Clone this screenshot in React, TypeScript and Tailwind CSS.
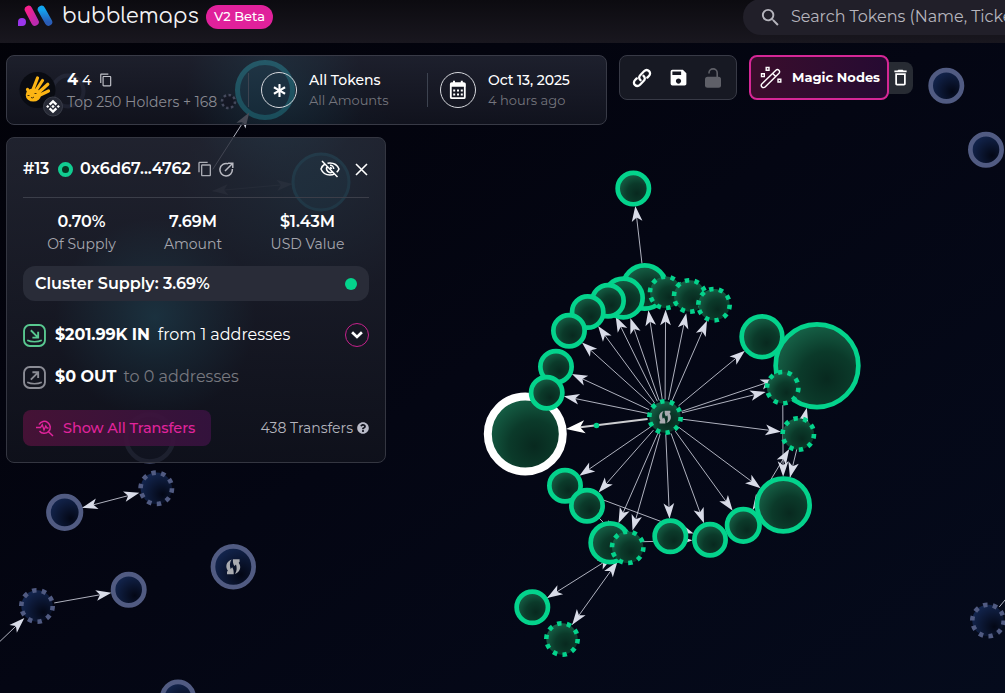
import { FaAsterisk, FaQuestionCircle } from 'react-icons/fa'
import { MdContentCopy, MdDeleteOutline, MdSave, MdSearch } from 'react-icons/md'

type Node = { x: number; y: number; r: number; dashed?: boolean; swap?: boolean }
type Edge = { from: Node; to: Node; both?: boolean }

const node = (x: number, y: number, r: number, dashed = false, swap = false): Node => ({
    x,
    y,
    r,
    dashed,
    swap,
})

const hub = node(665, 417, 18, true, true)
const selected = node(525.3, 434, 41.5)
const top = node(633.3, 188.6, 18)
const g1 = node(644.7, 287, 24)
const g2 = node(623.3, 298, 21.7)
const g3 = node(608, 300.7, 18)
const g4 = node(587.7, 312, 18)
const g5 = node(569, 330.7, 18)
const g6 = node(556, 366.7, 18)
const g7 = node(546.7, 392.7, 18)
const g8 = node(565, 485.7, 18)
const g9 = node(587, 505.7, 18)
const g10 = node(610, 542.7, 21.7)
const g11 = node(627.7, 547.3, 18, true)
const g12 = node(670.3, 536.3, 18)
const g13 = node(710, 539.7, 18)
const g14 = node(743.3, 525.3, 18.6)
const g15 = node(783.3, 505, 28.7)
const g16 = node(798.3, 434, 18, true)
const g17 = node(782.7, 387.7, 18, true)
const g18 = node(817, 365.7, 43.7)
const g19 = node(762, 336.7, 22.7)
const g20 = node(665.7, 292.3, 18, true)
const g21 = node(689.7, 296, 18, true)
const g22 = node(714, 304.7, 18, true)
const g23 = node(532.3, 607.3, 18)
const g24 = node(562, 639, 18, true)

const clusterNodes = [
    top, g1, g2, g3, g4, g5, g6, g8, g9, g10, g11, g12, g13, g14, g15,
    g19, g18, g17, g16, g20, g21, g22, g23, g24, hub,
]

const hubEdges = [
    g1, g2, g3, g4, g5, g6, g7, g8, g9, g10, g11, g12, g13, g14, g15,
    g16, g17, g18, g19, g20, g21, g22,
]

const clusterEdges: Edge[] = [
    ...hubEdges.map((to) => ({ from: hub, to })),
    { from: g1, to: top },
    { from: g8, to: g13 },
    { from: g10, to: g13 },
    { from: g9, to: g11 },
    { from: g23, to: g11, both: true },
    { from: g24, to: g11, both: true },
    { from: g17, to: g15 },
    { from: g15, to: g18, both: true },
    { from: g14, to: g16, both: true },
]

const b1 = node(64.7, 512.3, 18.6)
const b2 = node(156.3, 488.3, 18, true)
const b3 = node(128.7, 589.7, 18)
const b4 = node(37, 606, 18, true)
const b5 = node(988, 620.5, 18, true)

const looseNodes = [
    b1, b2, b3, b4, b5,
    node(233.3, 566.7, 22.7, false, true),
    node(178, 697.5, 18),
    node(946.3, 85.7, 18),
    node(986, 149.7, 18),
]

const looseEdges: Edge[] = [
    { from: b1, to: b2, both: true },
    { from: b4, to: b3 },
    { from: node(-30, 670, 0), to: b4 },
    { from: b5, to: node(1030, 570, 0) },
]

const Arrow = ({ from, to, both, color = '#d9dce8', size = 15.5, width = 1 }: Edge & {
    color?: string
    size?: number
    width?: number
}) => {
    const len = Math.hypot(to.x - from.x, to.y - from.y)
    const ux = (to.x - from.x) / len
    const uy = (to.y - from.y) / len
    const angle = (Math.atan2(uy, ux) * 180) / Math.PI
    const end = { x: to.x - ux * (to.r - 0.5), y: to.y - uy * (to.r - 0.5) }
    const start = { x: from.x + ux * (from.r - 0.5), y: from.y + uy * (from.r - 0.5) }
    const head = `M0 0L${-size} ${-size / 2.9}L${-size * 0.75} 0L${-size} ${size / 2.9}Z`

    return (
        <g fill={color}>
            <line
                x1={start.x}
                y1={start.y}
                x2={end.x - ux * 4}
                y2={end.y - uy * 4}
                stroke={color}
                strokeWidth={width}
                strokeOpacity={0.8}
            />
            <path d={head} transform={`translate(${end.x} ${end.y}) rotate(${angle})`} />
            {both && (
                <path d={head} transform={`translate(${start.x} ${start.y}) rotate(${angle + 180})`} />
            )}
        </g>
    )
}

const swapHalf = 'M1.200 7.200C3.300 4 3.200 1 2.200-2.200L.6-.6C-1-3-.9-5.500-.9-7.500H5.800V-5L4.900-4C7.600-.5 7 5 1.200 7.200Z'

const SwapGlyph = ({ x, y, scale }: { x: number; y: number; scale: number }) => (
    <g transform={`translate(${x} ${y}) scale(${scale})`} fill="#a9abb0">
        <path d={swapHalf} transform="translate(.5 0)" />
        <path d={swapHalf} transform="translate(-.5 0) rotate(180)" />
    </g>
)

const Bubble = ({ n, color, fill }: { n: Node; color: string; fill: string }) => {
    const stroke = n.dashed ? 4.6 : 4.7
    return (
        <g>
            <circle cx={n.x} cy={n.y} r={n.dashed ? n.r - 2.3 : n.r - 3} fill={`url(#${fill})`} />
            <circle
                cx={n.x}
                cy={n.y}
                r={n.r - stroke / 2}
                fill="none"
                stroke={color}
                strokeWidth={stroke}
                pathLength={n.dashed ? 20 : undefined}
                strokeDasharray={n.dashed ? '0.9 1.1' : undefined}
            />
            {n.swap && <SwapGlyph x={n.x} y={n.y} scale={n.dashed ? 0.85 : 1} />}
        </g>
    )
}

const BubbleGraph = () => (
    <svg className="absolute inset-0" width="1005" height="693" viewBox="0 0 1005 693">
        <defs>
            <radialGradient id="green" cx=".62" cy=".66" r=".75">
                <stop offset="0" stopColor="#08291f" />
                <stop offset=".45" stopColor="#0b3a2a" />
                <stop offset="1" stopColor="#18684c" />
            </radialGradient>
            <radialGradient id="navy" cx=".7" cy=".7" r=".75">
                <stop offset="0" stopColor="#030715" />
                <stop offset="1" stopColor="#13254e" />
            </radialGradient>
            <radialGradient id="glow">
                <stop offset="0" stopColor="#22a9c4" stopOpacity=".75" />
                <stop offset=".4" stopColor="#22a9c4" stopOpacity=".42" />
                <stop offset="1" stopColor="#22a9c4" stopOpacity="0" />
            </radialGradient>
            <clipPath id="panels">
                <rect x="6" y="55" width="601" height="70" rx="8" />
                <rect x="6" y="137" width="380" height="326" rx="8" />
            </clipPath>
        </defs>

        {/* bubbles that shine through the panels */}
        <g clipPath="url(#panels)">
            <circle cx="155" cy="318" r="100" fill="url(#glow)" />
            <circle cx="300" cy="190" r="120" fill="url(#glow)" opacity=".35" />
            <circle cx="275" cy="90" r="90" fill="url(#glow)" opacity=".6" />
        </g>
        <circle cx="265" cy="90" r="27.500" fill="#125d74" stroke="#25ecff" strokeWidth="5" />
        <circle cx="321" cy="182" r="28" fill="#126a84" stroke="#22d5f6" strokeWidth="3" opacity=".5" />
        <circle cx="68" cy="91" r="15.500" fill="none" stroke="#5f6991" strokeWidth="4" opacity=".45" />
        <circle cx="149.700" cy="438" r="23.500" fill="#10182f" stroke="#6a749c" strokeWidth="4.500" opacity=".7" />
        <circle cx="228.500" cy="101.500" r="6.500" fill="#000614" />
        <circle
            cx="228.500"
            cy="101.500"
            r="6.500"
            fill="none"
            stroke="#c0cbf4"
            strokeWidth="2.500"
            pathLength="16"
            strokeDasharray="1 1"
        />
        <g opacity=".2">
            <Arrow from={node(213, 191, 0)} to={node(292, 184, 0)} both />
        </g>
        <Arrow from={node(213, 169, 0)} to={node(249, 113, 0)} />

        {looseEdges.map((e, i) => (
            <Arrow key={i} {...e} />
        ))}
        {looseNodes.map((n, i) => (
            <Bubble key={i} n={n} color="#515b82" fill="navy" />
        ))}

        {clusterEdges.map((e, i) => (
            <Arrow key={i} {...e} />
        ))}
        <Arrow from={hub} to={selected} color="#ffffff" size={19} width={2} />
        <circle cx="596.500" cy="425.500" r="2.800" fill="#04d38c" />
        {clusterNodes.map((n, i) => (
            <Bubble key={i} n={n} color="#04d38c" fill="green" />
        ))}
        <circle cx={selected.x} cy={selected.y} r="37.500" fill="url(#green)" stroke="#fff" strokeWidth="8" />
        <Bubble n={g7} color="#04d38c" fill="green" />
    </svg>
)

const Logo = () => (
    <svg width="35" height="22" viewBox="0 0 35 22">
        <defs>
            <linearGradient id="pink" x1="0" y1="0" x2="1" y2="1">
                <stop stopColor="#f5208c" />
                <stop offset="1" stopColor="#bb2ab0" />
            </linearGradient>
            <linearGradient id="blue" x1="0" y1="0" x2="0" y2="1">
                <stop stopColor="#11a5f0" />
                <stop offset="1" stopColor="#2a5cb6" />
            </linearGradient>
        </defs>
        <circle cx="4" cy="17" r="4" fill="#9a35ea" />
        <path d="M0 17v4h4z" fill="#9a35ea" />
        <path d="M10.500 4.500L17 17" stroke="url(#pink)" strokeWidth="7.600" strokeLinecap="round" />
        <path d="M23.500 4.500L30.500 17" stroke="url(#blue)" strokeWidth="7.600" strokeLinecap="round" />
    </svg>
)

const TokenAvatar = () => (
    <svg width="44" height="46" viewBox="0 0 44 46">
        <circle cx="18.500" cy="18" r="18" fill="#090b12" />
        <g stroke="#fcb514" strokeWidth="3.200" strokeLinecap="round">
            <path d="M11.500 23L8.500 17.500M13 20L18.500 6M16 20L23.500 8.500M18 22L28.800 12.300M18 24.500L29.500 19" />
        </g>
        <ellipse cx="14.300" cy="23" rx="7.600" ry="6.600" fill="#fcb514" />
        <path d="M8.500 23.500h2M15.500 21.500h2M12 25.500q1.500 1 3-.5" stroke="#443008" strokeWidth="1" fill="none" />
        <circle cx="34" cy="34.500" r="9.500" fill="#272a36" stroke="#3a3d49" />
        <g transform="translate(34 34.500)" fill="#fff">
            <path d="M0-6.800L4.200-2.700 2.600-1.100 0-3.600-2.600-1.100-4.200-2.700ZM0 6.800L4.200 2.700 2.600 1.100 0 3.600-2.600 1.100-4.200 2.700ZM0-1.700L1.700 0 0 1.700-1.700 0ZM5.300-1.600L6.900 0 5.300 1.600 3.700 0ZM-5.300-1.600L-3.700 0-5.300 1.600-6.900 0Z" />
        </g>
    </svg>
)

const CalendarIcon = () => (
    <svg width="18" height="20" viewBox="0 0 18 20" fill="none" stroke="#fff">
        <rect x="1.800" y="3.200" width="14" height="15" rx="1" strokeWidth="1.800" />
        <path d="M1.500 5h15" strokeWidth="3.500" />
        <path d="M5 .8v4M12.800.8v4" strokeWidth="2" />
        <path d="M4.200 10.500h10M4.200 14.500h10" strokeWidth="2" strokeDasharray="2 1.800" />
    </svg>
)

const ShareIcon = () => (
    <svg width="15" height="15" viewBox="0 0 15 15" fill="none" stroke="#b9bac2" strokeWidth="1.500">
        <path d="M9 1.800A6.200 6.200 0 1 0 13.300 7M6 9l7-7M9 1.200h4.800V6" />
    </svg>
)

const EyeOffIcon = () => (
    <svg width="20" height="18" viewBox="0 0 20 18" fill="none" stroke="#fff" strokeWidth="1.500">
        <path d="M5 4C3 5.200 1.700 7 1 9c1.500 3.600 5 6 9 6 1.600 0 3-.3 4.300-1M7.500 3.200C8.300 3 9.200 3 10 3c4 0 7.500 2.400 9 6-.5 1.300-1.300 2.400-2.300 3.300" />
        <path d="M7.300 6.500a3.800 3.800 0 0 0 5.300 5.300M10 5.300A3.700 3.700 0 0 1 13.700 9M10 7.500A1.600 1.600 0 0 1 11.500 9M2 1l15.500 16" />
    </svg>
)

const LinkIcon = () => (
    <svg width="20" height="20" viewBox="0 0 20 20" fill="none" stroke="#fff" strokeWidth="2.300" strokeLinecap="round">
        <path d="M8.500 12.200C6.800 10.600 6.800 8.600 8.200 7.200L12 3.300C13.600 1.700 15.700 1.700 17.100 3.100S18.300 6.600 16.900 8L15.300 9.600" />
        <path d="M11.500 7.800C13.200 9.400 13.200 11.400 11.800 12.800L8 16.700C6.400 18.300 4.300 18.300 2.900 16.900S1.700 13.400 3.100 12L4.700 10.400" />
    </svg>
)

const UnlockIcon = () => (
    <svg width="16" height="20" viewBox="0 0 16 20">
        <path d="M4 5.500V5a3.700 3.700 0 0 1 8.200 0v4" fill="none" stroke="#5f6068" strokeWidth="1.600" />
        <rect y="8.800" width="16" height="11" rx="2.500" fill="#5f6068" />
    </svg>
)

const WandIcon = () => (
    <svg width="22" height="23" viewBox="0 0 22 23" fill="none" stroke="#fff" strokeWidth="1.400">
        <path d="M2 17.800L15.900 4.200a2.200 2.200 0 0 1 3.100 3.100L5.100 21a2.200 2.200 0 0 1-3.100-3.200ZM12.700 7.500l3 3" />
        <path d="M6.200 1.500h2.800v2.800H6.200zM1.500 7.800h2.800v2.800H1.500zM18 13.200h2.800V16H18z" />
    </svg>
)

const FlowIcon = ({ out = false, color }: { out?: boolean; color: string }) => (
    <svg width="23" height="23" viewBox="0 0 22 22" fill="none" stroke={color} strokeWidth="1.800">
        <rect x="1" y="1" width="20" height="20" rx="5.500" />
        {out ? <path d="M7.500 13L14 6.500M9 6h5.500v5.500" /> : <path d="M7.500 6l6.500 6.500M14.500 7.500V13H9" />}
        <path d="M4 15.500c4 2 10 2 14 0" strokeWidth="1.500" />
    </svg>
)

const TransfersIcon = () => (
    <svg width="18" height="17" viewBox="0 0 18 17" fill="none" stroke="#e0249c" strokeWidth="1.500">
        <path d="M3 4.500A6 6 0 1 1 3.500 11M12.200 11.500L17 16" />
        <path d="M0 7.500h4.500L6.300 4.800 8 10l1.800-4L11 8h1.500" strokeWidth="1.300" />
    </svg>
)

const stats = [
    { value: '0.70%', label: 'Of Supply', width: 'w-[117px]' },
    { value: '7.69M', label: 'Amount', width: 'w-[106px]' },
    { value: '$1.43M', label: 'USD Value', width: 'w-[123px]' },
]

const TopBar = () => (
    <header className="relative flex h-[43px] items-start bg-linear-to-b from-[#0c0b10] to-[#19171f]">
        <div className="mt-[5px] ml-[18px]">
            <Logo />
        </div>
        <span className="mt-px ml-[9px] w-[137px] font-['Comfortaa','Lato'] text-[21px] leading-[30px] tracking-[-0.05px] whitespace-nowrap text-[#f3f3f5]">
            bubblemaps
        </span>
        <span className="mt-[5px] ml-[7px] flex h-6 w-[67px] items-center justify-center rounded-full bg-[#e0219b] text-[13px] font-medium text-white">
            V2 Beta
        </span>
        <div className="absolute top-[-1px] right-0 flex h-9 w-[262px] items-center overflow-hidden rounded-l-full bg-[#211f29] text-[#b6b5bd]">
            <MdSearch className="ml-[16px] shrink-0 text-[23px]" />
            <span className="ml-[9px] text-[16px] tracking-[-0.03px] whitespace-nowrap">Search Tokens (Name, Ticker</span>
        </div>
    </header>
)

const TokenBar = () => (
    <section className="flex h-[70px] w-[601px] items-center rounded-lg border border-[#383a46] bg-linear-to-b from-[#262937]/75 to-[#151722]/75">
        <div className="mt-[9px] ml-[12px] h-[46px] w-11">
            <TokenAvatar />
        </div>
        <div className="mt-[2px] ml-[4px] w-[181px]">
            <div className="flex h-[22px] items-center text-white">
                <span className="text-[16px] font-bold">4</span>
                <span className="ml-1 text-[14px] font-medium">4</span>
                <MdContentCopy className="ml-[8px] text-[14px] text-[#c0c1c8]" />
            </div>
            <div className="h-[22px] text-[14px] leading-[22px] whitespace-nowrap text-[#888991]">
                Top 250 Holders + 168
            </div>
        </div>
        <div className="h-[34px] w-px bg-[#3d4350]" />
        <div className="ml-[12px] flex size-9 items-center justify-center rounded-full border border-[#d5d7dc] text-white">
            <FaAsterisk className="text-[13px]" />
        </div>
        <div className="ml-[12px] w-[118px]">
            <div className="text-[14px] leading-5 font-medium text-white">All Tokens</div>
            <div className="text-[13px] leading-5 tracking-[-0.05px] text-[#74757d]">All Amounts</div>
        </div>
        <div className="h-[34px] w-px bg-[#3d4350]" />
        <div className="ml-[12px] flex size-9 items-center justify-center rounded-full border border-[#d5d7dc]">
            <CalendarIcon />
        </div>
        <div className="ml-[12px]">
            <div className="text-[14px] leading-5 font-medium tracking-[-0.1px] text-white">Oct 13, 2025</div>
            <div className="text-[13px] leading-5 text-[#74757d]">4 hours ago</div>
        </div>
    </section>
)

const Toolbar = () => (
    <>
        <div className="ml-3 flex h-[45px] w-[118px] items-center gap-4 rounded-lg border border-[#383a46] bg-[#171923] pl-3">
            <LinkIcon />
            <MdSave className="text-[21px] text-white" />
            <UnlockIcon />
        </div>
        <div className="ml-3 flex items-center">
            <button className="z-10 flex h-[45px] w-[140px] items-center rounded-lg border-2 border-[#d52796] bg-linear-to-r from-[#3a0d2c] to-[#260a32] pl-[9px] text-white">
                <WandIcon />
                <span className="ml-[10px] text-[13px] font-bold whitespace-nowrap">Magic Nodes</span>
            </button>
            <div className="-ml-2 flex h-8 w-8 items-center rounded-lg bg-[#272b33] pl-[9px]">
                <MdDeleteOutline className="text-[21px] text-white" />
            </div>
        </div>
    </>
)

const AddressPanel = () => (
    <section className="mt-[12px] h-[326px] w-[380px] rounded-lg border border-[#343641] bg-linear-to-b from-[#272a37]/80 to-[#11131d]/80 px-4">
        <div className="flex h-[60px] items-center border-b border-[#3b3e49] pt-[3px] text-[16px] font-semibold text-white">
            <span className="w-[28px] text-[16px] tracking-[-0.2px]">#13</span>
            <span className="ml-[7px] size-[15px] rounded-full border-4 border-[#11cd91] bg-[#073522]" />
            <span className="ml-[7px] w-[112px] tracking-[0.05px] whitespace-nowrap">0x6d67...4762</span>
            <MdContentCopy className="ml-[5px] text-[16px] text-[#a9abb3]" />
            <span className="ml-[6px]">
                <ShareIcon />
            </span>
            <span className="ml-auto">
                <EyeOffIcon />
            </span>
            <svg className="mr-px ml-[15px]" width="13" height="13" viewBox="0 0 13 13" stroke="#fff" strokeWidth="1.600">
                <path d="M1 1l11 11M12 1L1 12" />
            </svg>
        </div>

        <div className="mt-[12px] flex text-center">
            {stats.map((s) => (
                <div key={s.label} className={s.width}>
                    <div className="text-[16px] leading-[23px] font-semibold text-white">{s.value}</div>
                    <div className="text-[14px] leading-[22px] text-[#a5a6ae]">{s.label}</div>
                </div>
            ))}
        </div>

        <div className="mt-[11px] flex h-[35px] items-center justify-between rounded-[12px] bg-[#292c38] px-3">
            <span className="text-[16px] font-semibold text-white">Cluster Supply: 3.69%</span>
            <span className="size-3 rounded-full bg-[#04d38c]" />
        </div>

        <div className="mt-[22px] flex h-6 items-center text-[16px] text-white">
            <FlowIcon color="#58c890" />
            <span className="ml-[9px] font-bold tracking-[-0.1px]">$201.99K IN</span>
            <span className="ml-[8px] tracking-[-0.03px]">from 1 addresses</span>
            <span className="ml-auto flex size-6 items-center justify-center rounded-full border border-[#c4218b]">
                <svg width="12" height="8" viewBox="0 0 11 7" fill="none" stroke="#fff" strokeWidth="2.500">
                    <path d="M1 1l4.500 4.300L10 1" />
                </svg>
            </span>
        </div>
        <div className="mt-[18px] flex h-6 items-center text-[16px] text-white">
            <FlowIcon out color="#8b8c95" />
            <span className="ml-[9px] font-bold">$0 OUT</span>
            <span className="ml-[7px] text-[#77787f]">to 0 addresses</span>
        </div>

        <div className="mt-[21px] flex items-center">
            <button className="flex h-9 w-[188px] items-center rounded-lg bg-linear-to-r from-[#4a1238]/90 to-[#37123f]/90 pt-px pl-[13px] text-[14.500px] font-medium text-[#e0249c]">
                <TransfersIcon />
                <span className="ml-[9px] tracking-[-0.1px] whitespace-nowrap">Show All Transfers</span>
            </button>
            <span className="ml-auto text-[14px] whitespace-nowrap text-[#b4b5be]">438 Transfers</span>
            <FaQuestionCircle className="ml-1 text-[12px] text-[#b9bbc9]" />
        </div>
    </section>
)

const App = () => (
    <main className="relative h-[693px] w-[1005px] overflow-hidden bg-linear-to-br from-[#020208] via-[#040613] to-[#050b1c] font-['Montserrat','Inter',sans-serif]">
        <BubbleGraph />
        <TopBar />
        <div className="relative mt-[12px] ml-1.5">
            <div className="flex items-start">
                <TokenBar />
                <Toolbar />
            </div>
            <AddressPanel />
        </div>
    </main>
)

export default App
